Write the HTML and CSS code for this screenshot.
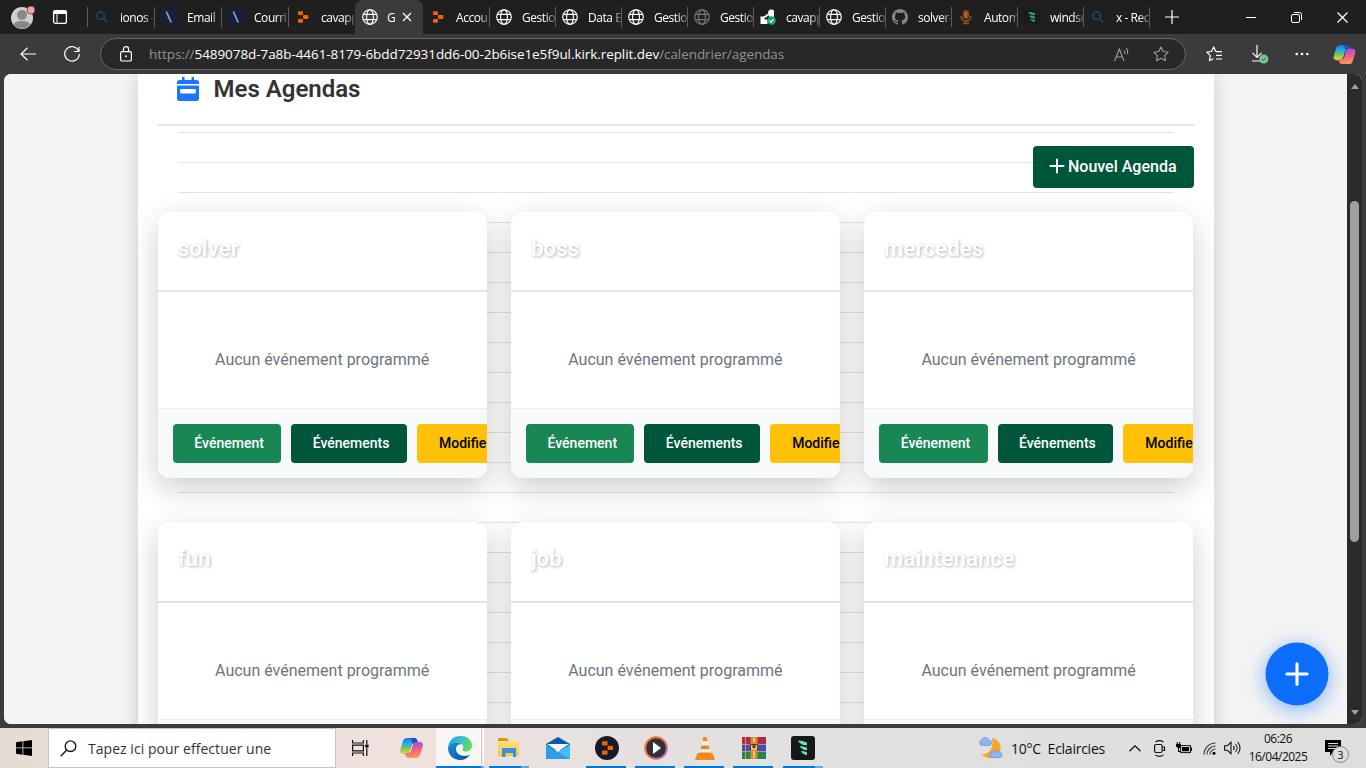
FILE: index.html
```html
<!DOCTYPE html>
<html lang="fr">
<head>
<meta charset="utf-8">
<title>Gestion des agendas</title>
<link rel="stylesheet" href="styles.css">
</head>
<body>
<svg class="defs" width="0" height="0">
  <defs>
    <linearGradient id="gCopA" x1="0" y1="0" x2="0" y2="1"><stop offset="0" stop-color="#1b73e0"/><stop offset=".35" stop-color="#22b2e8"/><stop offset=".65" stop-color="#7cc653"/><stop offset="1" stop-color="#f3d33a"/></linearGradient>
    <linearGradient id="gCopB" x1=".3" y1="0" x2=".5" y2="1"><stop offset="0" stop-color="#9a50e6"/><stop offset=".5" stop-color="#f0588c"/><stop offset="1" stop-color="#fba04c"/></linearGradient>
    <linearGradient id="gEdge" x1="0" y1="0" x2="1" y2=".3"><stop offset="0" stop-color="#1e9ee0"/><stop offset=".5" stop-color="#2cc0d8"/><stop offset="1" stop-color="#5fdb62"/></linearGradient>
    <linearGradient id="gEdgeB" x1="0" y1="0" x2="1" y2="1"><stop offset="0" stop-color="#1792dc"/><stop offset="1" stop-color="#0b4a99"/></linearGradient>
    <linearGradient id="gRing" x1="0" y1="0" x2="1" y2="1"><stop offset="0" stop-color="#f47a2c"/><stop offset=".5" stop-color="#e8704e"/><stop offset="1" stop-color="#9a6be0"/></linearGradient>
    <linearGradient id="gFold" x1="0" y1="0" x2="0" y2="1"><stop offset="0" stop-color="#ffe07c"/><stop offset="1" stop-color="#f8c63c"/></linearGradient>
  </defs>
  <symbol id="i-search" viewBox="0 0 16 16"><g fill="none" stroke="#1a466e" stroke-width="1.6"><circle cx="6.7" cy="6.7" r="3.8"/><path d="M9.6 9.6 13 13"/></g></symbol>
  <symbol id="i-ionos" viewBox="0 0 16 16"><path fill="#14203d" d="M0 0h16v16H0z"/><path d="M5.3 2.500 10.200 13.500" stroke="#9a9ca0" stroke-width="1.800" fill="none"/></symbol>
  <symbol id="i-replit" viewBox="0 0 16 16"><g fill="#f26207"><rect x="3" y="2.200" width="5" height="3.900" rx=".8"/><rect x="8" y="6.100" width="5.400" height="3.800" rx=".8"/><rect x="3" y="9.900" width="5" height="3.900" rx=".8"/></g></symbol>
  <symbol id="i-globe" viewBox="0 0 16 16"><g fill="none" stroke="currentColor" stroke-width="1.15"><circle cx="8" cy="8" r="7.3"/><ellipse cx="8" cy="8" rx="3.4" ry="7.3"/><path d="M1.4 5.4h13.2M1.4 10.600h13.200"/></g></symbol>
  <symbol id="i-cloud" viewBox="0 0 16 16"><path fill="#fff" d="M.5 7.500h4v3h3v4.500H.5z"/><path d="M4 8.500 9 5" stroke="#fff" stroke-width="2"/><path fill="#fff" d="M8 3.500A3.500 3.500 0 0 1 14 1.500V8H9.500z"/><circle cx="11.500" cy="11.500" r="4.300" fill="#14a37c"/><path d="m9.500 11.600 1.500 1.500 2.700-3" stroke="#fff" stroke-width="1.300" fill="none"/></symbol>
  <symbol id="i-github" viewBox="0 0 16 16"><path fill="#858585" d="M8 0C3.58 0 0 3.58 0 8c0 3.54 2.29 6.53 5.47 7.59.4.07.55-.17.55-.38v-1.49c-2.01.37-2.53-.49-2.69-.94-.09-.23-.48-.94-.82-1.13-.28-.15-.68-.52-.01-.53.63-.01 1.08.58 1.23.82.72 1.21 1.87.87 2.33.66.07-.52.28-.87.51-1.07-1.78-.2-3.64-.89-3.64-3.95 0-.87.31-1.59.82-2.15-.08-.2-.36-1.02.08-2.12 0 0 .67-.21 2.2.82a7.6 7.6 0 0 1 4 0c1.53-1.04 2.2-.82 2.2-.82.44 1.1.16 1.92.08 2.12.51.56.82 1.27.82 2.15 0 3.07-1.87 3.75-3.65 3.95.29.25.54.73.54 1.48v2.2c0 .21.15.46.55.38A8 8 0 0 0 16 8c0-4.42-3.58-8-8-8z"/></symbol>
  <symbol id="i-mic" viewBox="0 0 16 16"><rect x="5" y="1" width="6" height="9" rx="3" fill="#93471d"/><path d="M3.2 7c0 3 2 5 4.8 5s4.800-2 4.800-5M8 12v2.500M5 14.500h6" fill="none" stroke="#8a5320" stroke-width="1.500"/><path d="M8 3v5" stroke="#c98a62" stroke-width="1"/></symbol>
  <symbol id="i-surf" viewBox="0 0 16 16"><rect width="16" height="16" rx="2" fill="#171b1a"/><path fill="#3c9a7d" d="M4 3c2.500 0 5 .3 7 1.200v2C8 6.200 5 5.500 4 3zM5 6.500c2 .1 4 .4 6 1v2C8.500 9.400 6 9 5 6.500zM6.500 10c1.500 0 3 .3 4.500.9V13c-2-.1-3.800-.9-4.500-3z"/></symbol>
  <symbol id="i-copilot" viewBox="0 0 24 22"><path fill="url(#gCopA)" d="M8 1h6.500c2 0 2.800 1 3.300 2.600l.7 2.400h-3.200c-1.700 0-2.600 1-3 2.500l-1.600 5.500C10 16 9 17 7 17H4c-3 0-4-1.800-3.200-4.600L3.400 4C4 2 5.500 1 8 1z"/><path fill="#1552c4" d="M11.500 1h3c2 0 2.800 1 3.300 2.600l.7 2.400h-3.200c-1 0-1.800.4-2.300 1z"/><path fill="url(#gCopB)" d="M16 21H9.500c-2 0-2.800-1-3.300-2.600L5.500 16h3.200c1.700 0 2.600-1 3-2.500L13.300 8C14 6 15 5 17 5h3c3 0 4 1.800 3.200 4.600L20.600 18c-.6 2-2.100 3-4.600 3z"/></symbol>
  <symbol id="i-plus" viewBox="0 0 16 16"><path d="M8 1.500v13M1.500 8h13" stroke="#fff" stroke-width="2" stroke-linecap="round"/></symbol>
</svg>

<header class="tabstrip">
  <div class="tab-tools">
    <svg width="26" height="26" viewBox="0 0 26 26"><circle cx="12" cy="14" r="11" fill="#d2d0ce"/><circle cx="12" cy="11" r="5" fill="#8a8886"/><path fill="#8a8886" d="M4 21c0-3 3-4 8-4s8 1 8 4a11 11 0 0 1-16 0z"/><circle cx="21" cy="6" r="4" fill="#ffa19b" stroke="#1f1f1f" stroke-width=".6"/></svg>
    <svg width="16" height="16" viewBox="0 0 16 16"><rect x="1.600" y="1.600" width="12.800" height="12.800" rx="2" fill="none" stroke="#fff" stroke-width="1.300"/><path fill="#fff" d="M1.500 1.500h13v3.500h-13z"/><path d="M5 5v9.500" stroke="#fff"/></svg>
  </div>
  <nav class="tabs">
    <div class="tab wide"><svg><use href="#i-search"/></svg><span>ionos -</span></div>
    <div class="tab wide"><svg><use href="#i-ionos"/></svg><span>Email |</span></div>
    <div class="tab wide"><svg><use href="#i-ionos"/></svg><span>Courri</span></div>
    <div class="tab wide plain"><svg><use href="#i-replit"/></svg><span>cavapp</span></div>
    <div class="tab active"><svg><use href="#i-globe"/></svg><b>G</b><svg class="close" viewBox="0 0 10 10"><path d="m1 1 8 8M9 1 1 9" stroke="#fff" stroke-width="1.300"/></svg></div>
    <div class="tab"><svg><use href="#i-replit"/></svg><span>Accou</span></div>
    <div class="tab"><svg><use href="#i-globe"/></svg><span>Gestio</span></div>
    <div class="tab"><svg><use href="#i-globe"/></svg><span>Data E</span></div>
    <div class="tab"><svg><use href="#i-globe"/></svg><span>Gestio</span></div>
    <div class="tab"><svg class="dim"><use href="#i-globe"/></svg><span>Gestio</span></div>
    <div class="tab"><svg><use href="#i-cloud"/></svg><span>cavapp</span></div>
    <div class="tab"><svg><use href="#i-globe"/></svg><span>Gestio</span></div>
    <div class="tab"><svg><use href="#i-github"/></svg><span>solver-</span></div>
    <div class="tab"><svg><use href="#i-mic"/></svg><span>Autom</span></div>
    <div class="tab"><svg><use href="#i-surf"/></svg><span>windsu</span></div>
    <div class="tab"><svg><use href="#i-search"/></svg><span>x - Rec</span></div>
  </nav>
  <svg class="newtab" width="14" height="14" viewBox="0 0 14 14"><path d="M7 0v14M0 7h14" stroke="#fff" stroke-width="1.200"/></svg>
  <div class="window-controls">
    <svg width="10" height="11" viewBox="0 0 10 11"><path d="M0 5.500h10" stroke="#fff"/></svg>
    <svg width="11" height="11" viewBox="0 0 11 11"><g fill="none" stroke="#fff"><rect x=".5" y="2.500" width="8" height="8" rx="1.500"/><path d="M3 .500h5.500a2 2 0 0 1 2 2V8"/></g></svg>
    <svg width="11" height="11" viewBox="0 0 11 11"><path d="m.5.5 10 10M10.500.5l-10 10" stroke="#fff" stroke-width="1.200"/></svg>
  </div>
</header>

<div class="toolbar">
  <svg class="back" width="16" height="14" viewBox="0 0 16 14"><path d="M16 7H1M7.500.7 1 7l6.500 6.300" fill="none" stroke="#fff" stroke-width="1.200"/></svg>
  <svg class="reload" width="16" height="16" viewBox="0 0 16 16"><path d="M14.800 5.200A7.300 7.300 0 1 0 15.300 8M15 .7v4.800h-4.800" fill="none" stroke="#fff" stroke-width="1.200"/></svg>
  <div class="address">
    <svg width="12" height="16" viewBox="0 0 12 16"><g fill="none" stroke="#fff" stroke-width="1.200"><rect x=".6" y="5.600" width="10.800" height="9.400" rx="1.600"/><path d="M3.400 5.500V3.300a2.600 2.600 0 0 1 5.200 0v2.200"/></g><circle cx="6" cy="10.300" r="1" fill="#fff"/></svg>
    <div class="url">https://<b>5489078d-7a8b-4461-8179-6bdd72931dd6-00-2b6ise1e5f9ul.kirk.replit.dev</b>/calendrier/agendas</div>
    <svg class="read" width="16" height="15" viewBox="0 0 16 15"><g fill="none" stroke="#9b9b9b" stroke-width="1.100"><path d="m.6 14 4.700-12 4.700 12M2.300 10h6M10 3.500a4 4 0 0 1 .8 3.500M12.300 1.200a7 7 0 0 1 1.200 6"/></g></svg>
    <svg width="16" height="16" viewBox="0 0 16 16"><path d="m8 .9 2.200 4.600 5 .7-3.600 3.500.9 5L8 12.300l-4.500 2.400.9-5L.8 6.200l5-.7z" fill="none" stroke="#9b9b9b" stroke-width="1.100" stroke-linejoin="round"/></svg>
  </div>
  <div class="toolbar-actions">
    <svg width="17" height="16" viewBox="0 0 17 16"><g fill="none" stroke="#fff" stroke-width="1.200" stroke-linejoin="round"><path d="M9.800 5.500 7.700.9 5.500 5.500l-4.700.7 3.500 3.500-.9 5 4-2.200M9.800 5.600H16M10 9.300h6M10 13h6"/></g></svg>
    <svg width="18" height="19" viewBox="0 0 18 19"><path d="M6 0v12M1.500 7.800 6 12.300l4.500-4.500M1 16h8" fill="none" stroke="#fff" stroke-width="1.200"/><circle cx="12.800" cy="14" r="4.600" fill="#75c794"/><path d="m10.800 14 1.500 1.500 2.600-3" stroke="#245b38" fill="none"/></svg>
    <svg width="14" height="4" viewBox="0 0 14 4"><g fill="#fff"><circle cx="1.700" cy="2" r="1.300"/><circle cx="7" cy="2" r="1.300"/><circle cx="12.300" cy="2" r="1.300"/></g></svg>
    <svg width="23" height="21"><use href="#i-copilot"/></svg>
  </div>
</div>

<div class="viewport">
  <main class="page">
    <section class="sheet">
      <h1 class="title">
        <svg width="22" height="24" viewBox="0 0 22 24"><path fill="#1a75ff" d="M5 0h2.500v3h7V0H17v3h2.500A2.500 2.500 0 0 1 22 5.500V7H0V5.500A2.500 2.500 0 0 1 2.500 3H5zM0 8.500h22v13a2.500 2.500 0 0 1-2.500 2.500h-17A2.500 2.500 0 0 1 0 21.500zM4 12a.8.8 0 0 0-.8.800v3c0 .500.300.800.800.800h14c.500 0 .800-.300.800-.800v-3a.8.8 0 0 0-.8-.8z"/></svg>
        Mes Agendas
      </h1>
      <div class="actions"><button class="new-agenda"><svg width="16" height="16"><use href="#i-plus"/></svg>Nouvel Agenda</button></div>
      <div class="cards">
        <article class="card"><h2>solver</h2><p>Aucun événement programmé</p><footer><button class="add">Événement</button><button class="list">Événements</button><button class="edit">Modifier</button></footer></article>
        <article class="card"><h2>boss</h2><p>Aucun événement programmé</p><footer><button class="add">Événement</button><button class="list">Événements</button><button class="edit">Modifier</button></footer></article>
        <article class="card"><h2>mercedes</h2><p>Aucun événement programmé</p><footer><button class="add">Événement</button><button class="list">Événements</button><button class="edit">Modifier</button></footer></article>
        <article class="card"><h2>fun</h2><p>Aucun événement programmé</p><footer></footer></article>
        <article class="card"><h2>job</h2><p>Aucun événement programmé</p><footer></footer></article>
        <article class="card"><h2>maintenance</h2><p>Aucun événement programmé</p><footer></footer></article>
      </div>
    </section>
    <button class="fab"><svg width="25" height="25"><use href="#i-plus"/></svg></button>
  </main>
  <aside class="scrollbar"><i class="up"></i><i class="thumb"></i><i class="down"></i></aside>
</div>

<footer class="taskbar">
  <div class="start"><svg width="16" height="16" viewBox="0 0 16 16"><path d="M0 2.200 6.500 1.300v6.200H0zM7.300 1.200 16 0v7.500H7.300zM0 8.300h6.500v6.400L0 13.800zM7.300 8.300H16V16l-8.700-1.200z"/></svg></div>
  <div class="search"><svg width="17" height="17" viewBox="0 0 17 17"><g fill="none" stroke="#111" stroke-width="1.300"><circle cx="10.500" cy="6.200" r="5.300"/><path d="M6.700 10 .7 16.300"/></g></svg><span>Tapez ici pour effectuer une</span></div>
  <div class="apps">
    <div class="app"><svg width="17" height="16" viewBox="0 0 17 16"><g fill="none" stroke="#111" stroke-width="1.200"><path d="M.6 0v3h10.800V0M.6 16v-3h10.800v3M.6 5.100h10.800v5.800H.6zM14.800 0v4M14.800 8v8"/></g><path d="M13.200 4.500h3.300v3h-3.300z"/></svg></div>
    <div class="app"><svg width="25" height="22"><use href="#i-copilot"/></svg></div>
    <div class="app current"><svg width="24" height="24" viewBox="0 0 24 24"><path fill="url(#gEdge)" d="M0 12C.3 4.500 6 0 12.500 0 20 0 24 5 24 9.500c0 3.800-2.600 6-6 6-2.200 0-3.600-.6-3.600-1.500 0-.7.900-1 .9-2.700C15.300 8 12 6.500 8.500 6.500 4.500 6.500 1 9 0 12z"/><path fill="url(#gEdgeB)" d="M0 12c1-3.500 4.500-5.500 8.500-5.500 2.500 0 4.300.7 5.500 2-4-1-6 1.500-6 4.500 0 4 4 7 8.500 7 2.500 0 4-.8 5.500-1.500C20 22 16.500 24 12 24 5.500 24 0 19 0 12z"/></svg></div>
    <div class="app running stack"><svg width="22" height="20" viewBox="0 0 22 20"><path fill="#d99a13" d="M0 1c0-.5.500-1 1-1h8l2 3v4H0z"/><path fill="url(#gFold)" d="M0 3h20c.6 0 1 .4 1 1v14H0z"/><path fill="#3e8edb" d="M4 10h14v9h-3v-4H7.500v4H4z"/></svg></div>
    <div class="app"><svg width="24" height="22" viewBox="0 0 24 22"><path fill="#075ca8" d="M0 7 12 0l12 7v6H0z"/><path fill="#2b9fe5" d="M0 7.500 12 15l12-7.500V22H0z"/><path fill="#40c0f0" d="M24 7.500V22L12 15z"/><path fill="#f3f5f8" d="M1 7h22L12 14.500z"/></svg></div>
    <div class="app running"><svg width="24" height="24" viewBox="0 0 24 24"><circle cx="12" cy="12" r="12" fill="#151b2b"/><g fill="#f26207"><rect x="7" y="5.200" width="5.600" height="4.300" rx=".8"/><rect x="12.600" y="9.800" width="5.400" height="4.300" rx=".8"/><rect x="7" y="14.400" width="5.600" height="4.300" rx=".8"/></g></svg></div>
    <div class="app running"><svg width="24" height="24" viewBox="0 0 24 24"><circle cx="12" cy="12" r="10.800" fill="#303036" stroke="url(#gRing)" stroke-width="2"/><path fill="#fff" d="m9 6 8 6-8 6z"/></svg></div>
    <div class="app running"><svg width="20" height="23" viewBox="0 0 20 23"><path fill="#f08a1c" d="M2.500 16h15L20 23H0z"/><path fill="#f58220" d="M8.500 0h3L16 18c-2 2-10 2-12 0z"/><path fill="#f1eee9" d="M7.300 4h5.400l1.200 4.600H6.100zM5.200 12h9.600l.9 3.600H4.300z"/></svg></div>
    <div class="app running"><svg width="24" height="22" viewBox="0 0 24 22"><path fill="#b3294b" d="M0 0h24v7H0z"/><path fill="#4b4da8" d="M0 7.500h24v7H0z"/><path fill="#27844a" d="M0 15h24v7H0z"/><path d="M3.500 0v22" stroke="#e0b653" stroke-width=".8"/><path fill="#d88b2a" d="M8.500 0h7v22h-7z"/><path fill="#713713" d="M8 7h8v6H8z"/><path d="M9.800 8v4h4.500V8M12 1v4M12 14v7" stroke="#f6e3b2" fill="none" stroke-width="1.300"/></svg></div>
    <div class="app running stack"><svg width="24" height="24" viewBox="0 0 24 24"><rect width="24" height="24" rx="3" fill="#151918"/><path fill="#62e0b4" d="M7 4.500c3 .2 6 .8 9 2v3c-4-.2-7.500-1.500-9-5zM8.500 10c2.500.2 5 .6 7.500 1.500v2.800c-3.500-.2-6.300-1.500-7.500-4.300zM10 15c2 .1 4 .5 6 1.200V19c-3-.2-5-1.500-6-4z"/></svg></div>
  </div>
  <div class="tray">
    <svg class="moon" width="25" height="22" viewBox="0 0 25 22"><path fill="#f5a623" d="M14 1c6 1.500 9 5.500 8.500 11C22 18 17 21.500 11 21c-3-.3-5.500-1.500-7-3.500 7 0 12-6 10-16.500z"/><path fill="#8fb4f2" stroke="#648fda" stroke-width=".7" d="M3.500 8.500a3 3 0 0 1 0-5.500 4 4 0 0 1 7.500 0 2.800 2.800 0 0 1 .5 5.500zM14 20.500a2.500 2.500 0 0 1 0-5 4 4 0 0 1 7 0 2.500 2.500 0 0 1 1 5z"/></svg>
    <span class="weather">10°C&nbsp; Eclaircies</span>
    <svg class="chev" width="12" height="7" viewBox="0 0 12 7"><path d="m.5 6.300 5.500-5.500 5.500 5.500" fill="none" stroke="#111" stroke-width="1.300"/></svg>
    <svg class="cam" width="12" height="17" viewBox="0 0 12 17"><g fill="none" stroke="#111" stroke-width="1.200"><rect x=".6" y="4.500" width="7.500" height="8" rx="1.500"/><path d="M8.500 7h2v3.500h-2M1.500 2c2.500-1.600 5.500-1.600 8 0M1.500 15c2.500 1.600 5.500 1.600 8 0"/></g></svg>
    <svg class="batt" width="16" height="12" viewBox="0 0 16 12"><rect x="4.600" y="3.600" width="9.800" height="7" fill="none" stroke="#111"/><path d="M6 5h7v4.300H6zM15 5.500h1v3.500h-1zM0 2h5v2.500L3.800 6H3v3h2v1H2V6L0 4.500zM.8 0h1v2h-1zM3.200 0h1v2h-1z"/></svg>
    <svg class="wifi" width="13" height="13" viewBox="0 0 13 13"><g fill="none" stroke="#333" stroke-width="1.100"><path d="M1 12.500A11.500 11.500 0 0 1 12.500 1M4 12.500A8.500 8.500 0 0 1 12.500 4M7 12.500A5.500 5.500 0 0 1 12.500 7"/></g><circle cx="11" cy="11.300" r="1.500"/></svg>
    <svg class="sound" width="17" height="14" viewBox="0 0 17 14"><g fill="none" stroke="#111" stroke-width="1.100"><path d="M.6 4.700h2.800L7 1.300v11.400L3.400 9.300H.6zM9.300 5a3 3 0 0 1 0 4M11.500 3a6 6 0 0 1 0 8M13.700 1a9 9 0 0 1 0 12"/></g></svg>
    <div class="clock"><span>06:26</span><span>16/04/2025</span></div>
    <div class="notif"><svg width="16" height="16" viewBox="0 0 16 16"><path d="M0 0h16v12H8l-3 4v-4H0z"/><path d="M3 3.500h10M3 6h10M3 8.500h7" stroke="#ddd"/></svg><em>3</em></div>
  </div>
</footer>
</body>
</html>
```
FILE: styles.css
```css
* { box-sizing: border-box; }
body { margin: 0; width: 1366px; height: 768px; overflow: hidden; display: flex; flex-direction: column; background: #3b3b3b; font-family: "Open Sans", "Noto Sans", sans-serif; }
button { font: inherit; border: 0; margin: 0; padding: 0; }
svg { display: block; flex: none; }
.defs { position: absolute; }

/* browser tabs */
.tabstrip { height: 34px; flex: none; display: flex; align-items: center; background: #1f1f1f; }
.tab-tools { width: 88px; display: flex; align-items: center; gap: 16px; padding: 0 0 0 10px; background: linear-gradient(#5b5b5b, #5b5b5b) right 3px / 1px 20px no-repeat; }
.tab-tools svg:first-child { margin-bottom: 1px; }
.tabs { display: flex; height: 34px; }
.tab { width: 66px; display: flex; align-items: center; padding-left: 6px; color: #fff; font-size: 12px; background: linear-gradient(#5b5b5b, #5b5b5b) right 7px / 1px 20px no-repeat; }
.tab.wide { width: 67px; }
.tab.plain { background: none; }
.tab svg { width: 16px; height: 16px; }
.tab .dim { color: #777; }
.tab span { margin-left: 10px; width: 33px; overflow: hidden; white-space: nowrap; letter-spacing: -.45px; -webkit-mask-image: linear-gradient(90deg, #000 70%, rgba(0,0,0,.25)); mask-image: linear-gradient(90deg, #000 70%, rgba(0,0,0,.25)); }
.tab.active { width: 68px; margin: 0 1px 0 -1px; padding-left: 7px; background: #3b3b3b; border-radius: 8px 8px 0 0; }
.tab.active b { font-weight: 400; margin-left: 9px; width: 8px; overflow: hidden; }
.tab .close { width: 10px; height: 10px; margin-left: 7px; }
.newtab { margin-left: 15px; }
.window-controls { margin-left: auto; display: flex; gap: 35px; padding-right: 18px; }

/* address bar */
.toolbar { height: 40px; flex: none; display: flex; align-items: center; padding-left: 20px; background: #3b3b3b; }
.reload { margin-left: 28px; }
.address { width: 1086px; height: 32px; margin-left: 20px; border: 1px solid #666; border-radius: 16px; background: #282828; display: flex; align-items: center; padding: 0 16px 0 19px; }
.url { margin-left: 17px; flex: 1; color: #929292; font-size: 13.500px; letter-spacing: -.07px; white-space: nowrap; }
.url b { color: #fff; font-weight: 400; }
.read { margin-right: 23px; }
.toolbar-actions { display: flex; align-items: center; flex: 1; padding-left: 20px; }
.toolbar-actions svg:nth-child(2) { margin-left: 28px; }
.toolbar-actions svg:nth-child(3) { margin-left: 26px; }
.toolbar-actions svg:nth-child(4) { margin-left: 24px; }

/* page */
.viewport { height: 650px; flex: none; margin: 0 4px 4px; display: flex; border-radius: 7px; overflow: hidden; background: #f4f4f4; }
.page { position: relative; width: 1343px; overflow: hidden; background: #f4f4f4; font-family: Roboto, sans-serif; }
.sheet { position: relative; width: 1076px; height: 900px; margin-left: 134px; padding: 0 20px; background: #fff; box-shadow: 0 0 20px rgba(0,0,0,.16); }
.sheet::before { content: ""; position: absolute; z-index: 1; top: 58px; bottom: 0; left: 40px; right: 40px; background: repeating-linear-gradient(rgba(0,0,0,.11) 0 1px, transparent 1px 30px); pointer-events: none; }
.title { margin: 0; height: 52px; padding: 0 0 20px 19px; display: flex; align-items: center; gap: 14.500px; border-bottom: 2px solid #e3e4e5; color: #333; font-size: 24px; font-weight: 600; line-height: 28px; }
.actions { display: flex; justify-content: flex-end; padding-top: 20px; }
.new-agenda { width: 161px; height: 42px; display: flex; align-items: center; justify-content: center; gap: 3px; padding: 0 1.500px 2px 0; border-radius: 4px; background: #00563b; color: #fff; font-size: 16px; font-weight: 500; }
.cards { display: grid; grid-template-columns: repeat(3, 329px); gap: 44.300px 24.200px; margin-top: 23.500px; }
.card { position: relative; z-index: 2; height: 266.500px; display: flex; flex-direction: column; overflow: hidden; border-radius: 12px; background: #fff; box-shadow: 0 10px 30px rgba(0,0,0,.2); }
.card h2 { margin: 0; height: 80.300px; padding: 22px 19.700px 0; border-bottom: 2px solid #e3e4e5; color: #fff; font-size: 22.400px; line-height: 28px; font-weight: 600; text-shadow: 1px 1px 3px rgba(0,0,0,.3); }
.card p { margin: 0; flex: 1; display: flex; align-items: center; justify-content: center; padding: 18.800px .6px 0 0; color: #6c757d; font-size: 16px; }
.card footer { height: 70px; flex: none; display: flex; gap: 10px; padding: 15px; border-top: 1px solid #ebedef; background: #f8f9fb; }
.card button { height: 39px; flex: none; padding: 0 0 2px 4px; border-radius: 4px; color: #fff; font-size: 14px; font-weight: 500; }
.card .add { width: 108.200px; background: #198754; }
.card .list { width: 115.700px; background: #00563b; }
.card .edit { width: 92.500px; background: #ffc107; color: #000; }
.fab { position: absolute; left: 1261.500px; top: 568.500px; width: 63px; height: 63px; transform: translate(-.5px, -.5px); border-radius: 50%; background: #0d6efd; box-shadow: 0 4px 20px rgba(13,110,253,.5); display: flex; align-items: center; justify-content: center; }

.scrollbar { width: 15px; background: #2b2b2b; display: flex; flex-direction: column; align-items: center; padding: 10px 0 9px; }
.up { border: 4.500px solid transparent; border-top: 0; border-bottom: 5px solid #a0a0a0; }
.down { border: 4.500px solid transparent; border-bottom: 0; border-top: 5px solid #a0a0a0; margin-top: auto; }
.thumb { width: 9px; height: 341px; margin-top: 112px; border-radius: 5px; background: #9f9f9f; }

/* taskbar */
.taskbar { height: 40px; flex: none; display: flex; background: linear-gradient(90deg, #e5dbd3, #f0e1dd 29%, #e8e1df 38%, #e2e0e1 60%, #dedede); color: #111; }
.start { width: 48px; display: flex; align-items: center; justify-content: center; }
.search { width: 288px; border: 1px solid #c5c5c5; background: #fff; display: flex; align-items: center; padding-left: 11px; gap: 11px; font-size: 14px; color: #333; letter-spacing: .04px; }
.apps { display: flex; }
.app { width: 49px; height: 40px; display: flex; align-items: center; justify-content: center; }
.app:nth-child(2) { margin-left: 2px; }
.app.current { width: 48px; background: linear-gradient(#0078d7, #0078d7) 0 100% / 45px 2px no-repeat, linear-gradient(#64a9e0, #64a9e0) 100% 100% / 3px 2px no-repeat, linear-gradient(90deg, transparent 45px, #cdc8c6 45px 46px, transparent 46px), #f9f5f3; }
.app.running { background: linear-gradient(#0078d7, #0078d7) 4px 100% / 40px 2px no-repeat; }
.app.stack { background: linear-gradient(#0078d7, #0078d7) 5px 100% / 32px 2px no-repeat, linear-gradient(#64a9e0, #64a9e0) 37px 100% / 8px 2px no-repeat; }
.tray { margin-left: auto; display: flex; align-items: center; width: 388px; }
.weather { margin-left: 8px; width: 96px; white-space: nowrap; font-size: 14px; letter-spacing: -.25px; }
.chev { margin-left: 22px; }
.cam { margin-left: 13px; }
.batt { margin-left: 10px; }
.wifi { margin-left: 11px; }
.sound { margin-left: 8px; }
.clock { width: 64px; margin-left: 5px; display: flex; flex-direction: column; align-items: center; font-size: 12px; line-height: 18px; letter-spacing: -.5px; white-space: nowrap; }
.notif { position: relative; margin-left: 15px; }
.notif em { position: absolute; left: 7px; top: 6px; width: 17px; height: 17px; border: 1px solid #888; border-radius: 50%; background: #dedede; font: normal 11px/15px "Open Sans", sans-serif; text-align: center; }
```
